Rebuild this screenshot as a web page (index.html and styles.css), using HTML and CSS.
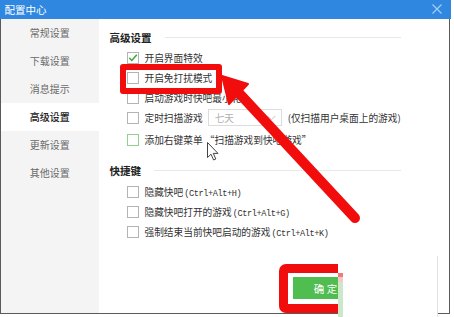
FILE: index.html
```html
<!DOCTYPE html>
<html lang="zh">
<head>
<meta charset="utf-8">
<link rel="stylesheet" href="styles.css">
</head>
<body>
<div class="window">
  <div class="titlebar">
    <span class="title">配置中心</span>
    <svg class="close" width="10" height="10" viewBox="0 0 10 10"><path d="M0.5 0.5L9.5 9.5M9.5 0.5L0.5 9.5" stroke="#a4cdf4" stroke-width="1.2" fill="none"/></svg>
  </div>
  <div class="main">
    <nav class="sidebar">
      <div class="nav-item">常规设置</div>
      <div class="nav-item">下载设置</div>
      <div class="nav-item">消息提示</div>
      <div class="nav-item active">高级设置</div>
      <div class="nav-item">更新设置</div>
      <div class="nav-item">其他设置</div>
    </nav>
    <section class="content">
      <div class="heading"><span>高级设置</span><i class="rule"></i></div>
      <div class="rows">
        <div class="row"><span class="box checked"><svg width="12" height="12" viewBox="0 0 12 12"><path d="M2.3 5.8L4.8 8.4L9.8 2.8" stroke="#38a838" stroke-width="1.5" fill="none"/></svg></span><span>开启界面特效</span></div>
        <div class="row"><span class="box"></span><span>开启免打扰模式</span></div>
        <div class="row"><span class="box"></span><span>启动游戏时快吧最小化</span></div>
        <div class="row row-tall"><span class="box"></span><span>定时扫描游戏</span>
          <span class="select"><span>七天</span><svg width="9" height="6" viewBox="0 0 9 6"><path d="M0.5 0.8L4.5 4.8L8.5 0.8" stroke="#c4c4c4" stroke-width="1" fill="none"/></svg></span>
          <span class="note">(仅扫描用户桌面上的游戏)</span></div>
        <div class="row"><span class="box hover"></span><span>添加右键菜单 “扫描游戏到快吧游戏”</span></div>
      </div>
      <div class="heading heading-2"><span>快捷键</span><i class="rule"></i></div>
      <div class="rows">
        <div class="row"><span class="box"></span><span>隐藏快吧<span class="key">(Ctrl+Alt+H)</span></span></div>
        <div class="row"><span class="box"></span><span>隐藏快吧打开的游戏<span class="key">(Ctrl+Alt+G)</span></span></div>
        <div class="row"><span class="box"></span><span>强制结束当前快吧启动的游戏<span class="key">(Ctrl+Alt+K)</span></span></div>
      </div>
      <div class="footer"><button class="ok">确 定</button></div>
    </section>
  </div>
</div>

<div class="mark mark-option"></div>
<div class="mark mark-button"></div>
<div class="patch"><i class="strip"></i></div>

<svg class="arrow" width="454" height="317" viewBox="0 0 454 317">
  <line x1="238" y1="92" x2="355" y2="218" stroke="#f20d0d" stroke-width="10" stroke-linecap="round"/>
  <polygon points="222,76 248,84 229,104" fill="#f20d0d" stroke="#f20d0d" stroke-width="2" stroke-linejoin="round"/>
</svg>

<svg class="cursor" width="12" height="19" viewBox="0 0 12 19">
  <path d="M0.5 0.5L0.5 15.5L4 12.2L6.6 18L8.8 17L6.3 11.4L11 11.4Z" fill="#fff" stroke="#444" stroke-width="1" stroke-linejoin="round"/>
</svg>
</body>
</html>
```
FILE: styles.css
```css
* { box-sizing: border-box; }
html, body { margin: 0; padding: 0; }
body {
  width: 454px;
  height: 317px;
  background: #fff;
  position: relative;
  overflow: hidden;
  font-family: "Noto Sans CJK SC", "Noto Sans", sans-serif;
  font-size: 9.7px;
  color: #333;
}
.window {
  width: 450px;
  height: 314px;
  border: 1.5px solid #5a5a5a;
  border-top: none;
  display: flex;
  flex-direction: column;
}
.titlebar {
  height: 19px;
  margin: 0 -1.5px;
  background: #2f87e0;
  display: flex;
  align-items: center;
  justify-content: space-between;
  padding: 0 9px 0 5px;
  flex-shrink: 0;
}
.title { color: #fff; font-size: 10.5px; line-height: 19px; }
.close { display: block; margin-top: -1px; }
.main { flex: 1; display: flex; min-height: 0; }
.sidebar {
  width: 97.5px;
  background: #f4f4f4;
  flex-shrink: 0;
}
.nav-item {
  height: 28px;
  line-height: 28px;
  text-align: center;
  color: #6a6a6a;
  font-size: 10px;
}
.nav-item.active { background: #fff; color: #222; font-weight: 500; }
.content {
  flex: 1;
  padding: 10px 54px 0 11px;
  display: flex;
  flex-direction: column;
}
.heading {
  display: flex;
  align-items: center;
  height: 16px;
  font-weight: 700;
  font-size: 10.5px;
  color: #222;
}
.heading-2 { margin-top: 12px; }
.rule {
  flex: 1;
  height: 1px;
  background: #e8e8e8;
  margin-left: 13px;
}
.rows { padding-left: 17px; margin-top: 3px; }
.heading-2 + .rows { margin-top: 4px; }
.row {
  height: 20px;
  display: flex;
  align-items: center;
  white-space: nowrap;
  color: #333;
}
.row-tall { height: 21px; margin-top: -1px; margin-bottom: 2px; }
.box {
  width: 12px;
  height: 12px;
  border: 1px solid #b4b4b4;
  background: #fff;
  margin-right: 6px;
  flex-shrink: 0;
  position: relative;
}
.box svg { position: absolute; left: -1px; top: -1px; }
.box.hover { border-color: #8fd18f; }
.select {
  width: 74px;
  height: 17px;
  border: 1px solid #dcdcdc;
  margin-left: 5px;
  display: flex;
  align-items: center;
  justify-content: space-between;
  padding: 0 5px 0 6px;
  color: #b0b0b0;
}
.note { margin-left: 6px; }
.key {
  font-family: "Liberation Mono", monospace;
  font-size: 8.6px;
  letter-spacing: -0.4px;
  margin-left: 1px;
}
.footer { margin-top: 35px; padding-left: 183px; }
.ok {
  width: 66px;
  height: 22px;
  border: none;
  background: #50bd50;
  color: #fff;
  font-family: "Noto Sans CJK SC", sans-serif;
  font-size: 10.5px;
  padding: 0;
}
.mark {
  position: absolute;
  border: 6px solid #f20d0d;
  border-radius: 3px;
}
.mark-option { left: 120px; top: 64px; width: 102px; height: 30px; }
.mark-button { left: 279px; top: 264px; width: 100px; height: 49px; border-width: 9px; border-radius: 7px; }
.patch {
  position: absolute;
  left: 338px;
  top: 256px;
  width: 100px;
  height: 61px;
  background: #fff;
  border-right: 1px solid #e2e2e2;
}
.strip {
  position: absolute;
  left: 0;
  top: 17px;
  width: 5px;
  height: 44px;
  background: linear-gradient(#f07a7a 0, #f07a7a 4px, #f6c8c8 4px, #f6c8c8 9px, #cbe8cb 9px);
}
.arrow { position: absolute; left: 0; top: 0; pointer-events: none; }
.cursor { position: absolute; left: 207px; top: 142px; }
```
